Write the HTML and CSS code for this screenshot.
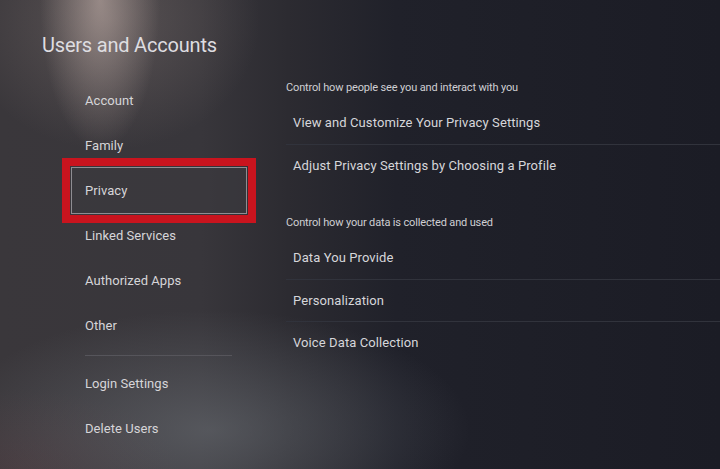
FILE: index.html
```html
<!DOCTYPE html>
<html lang="en">
<head>
  <meta charset="UTF-8" />
  <meta name="viewport" content="width=device-width, initial-scale=1.0" />
  <title>Users and Accounts</title>
  <link rel="stylesheet" href="styles.css">
</head>
<body>
  <div class="screen">
    <h1 class="title">Users and Accounts</h1>

    <div class="content">
      <div class="menu">
        <a href="#" class="menu-item">Account</a>
        <a href="#" class="menu-item">Family</a>
        <a href="#" class="menu-item active">Privacy</a>
        <a href="#" class="menu-item">Linked Services</a>
        <a href="#" class="menu-item">Authorized Apps</a>
        <a href="#" class="menu-item">Other</a>
        <div class="menu-divider"></div>
        <a href="#" class="menu-item">Login Settings</a>
        <a href="#" class="menu-item">Delete Users</a>
      </div>

      <div class="panel">
        <div class="group">
          <div class="group-label">Control how people see you and interact with you</div>
          <a href="#" class="row">View and Customize Your Privacy Settings</a>
          <a href="#" class="row">Adjust Privacy Settings by Choosing a Profile</a>
        </div>
        <div class="group">
          <div class="group-label">Control how your data is collected and used</div>
          <a href="#" class="row">Data You Provide</a>
          <a href="#" class="row">Personalization</a>
          <a href="#" class="row">Voice Data Collection</a>
        </div>
      </div>
    </div>
  </div>
</body>
</html>
```

FILE: styles.css
```css
* {
  box-sizing: border-box;
}
body {
  margin: 0;
  padding: 0;
  font-family: Roboto, "Liberation Sans", sans-serif;
  color: #d9d9dc;
  background: #1c1d26;
  overflow: hidden;
}
.screen {
  width: 720px;
  height: 469px;
  background:
    radial-gradient(ellipse 60px 150px at 100px 0, rgba(205, 185, 178, 0.55), rgba(205, 185, 178, 0) 100%),
    radial-gradient(ellipse 150px 130px at 110px 20px, rgba(150, 135, 130, 0.35), rgba(150, 135, 130, 0) 100%),
    radial-gradient(ellipse 260px 120px at 210px 430px, rgba(115, 120, 126, 0.5), rgba(115, 120, 126, 0) 100%),
    radial-gradient(ellipse 160px 80px at 20px 469px, rgba(90, 60, 64, 0.35), rgba(90, 60, 64, 0) 100%),
    linear-gradient(to right, #3a373b 0%, #38363b 28%, #2c2b31 40%, #20212a 55%, #1b1c25 100%);
}
.title {
  margin: 0;
  padding: 33px 0 0 42px;
  font-size: 20px;
  font-weight: 400;
  line-height: 24px;
  color: #dedde0;
  letter-spacing: -0.2px;
}
.content {
  display: grid;
  grid-template-columns: 286px 1fr;
}
.menu {
  display: flex;
  flex-direction: column;
  padding: 21px 0 0 71px;
}
.menu-item {
  display: block;
  width: 176px;
  height: 45px;
  line-height: 45px;
  padding-left: 14px;
  font-size: 13px;
  color: #d6d5d8;
  text-decoration: none;
  letter-spacing: 0.05px;
}
.menu-item.active {
  height: 47px;
  line-height: 45px;
  margin: -1px 0;
  padding-left: 13px;
  border: 1.5px solid #8e8d92;
  background: rgba(60, 58, 63, 0.6);
  outline: 8px solid #c9141e;
  outline-offset: 1px;
}
.menu-divider {
  width: 147px;
  height: 1px;
  margin: 7px 0 5px 14px;
  background: #56555b;
}
.panel {
  padding-top: 23px;
}
.group-label {
  height: 16px;
  line-height: 16px;
  font-size: 11px;
  color: #cfcfd3;
  letter-spacing: -0.15px;
}
.row {
  display: block;
  height: 42px;
  line-height: 42px;
  padding-left: 7px;
  font-size: 13px;
  color: #d6d6da;
  text-decoration: none;
  letter-spacing: 0.1px;
}
.group-label + .row {
  margin-top: 6px;
}
.row + .row {
  border-top: 1px solid #31333c;
}
.group + .group {
  margin-top: 29px;
}
```
